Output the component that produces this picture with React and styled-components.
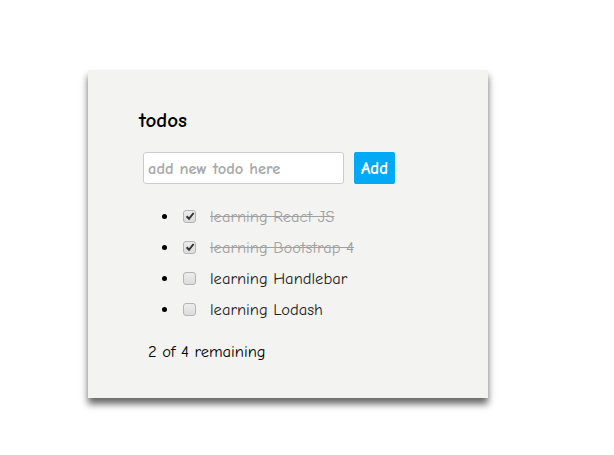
import React, { useState } from "react";
import styled, { createGlobalStyle } from "styled-components";

const GlobalStyle = createGlobalStyle`
  html, body {
    margin: 0;
    padding: 0;
    background: #ffffff;
  }
  body {
    font-family: "Comic Sans MS", "Comic Neue", "Open Sans", sans-serif;
  }
`;

const initialTodos = [
  { id: 1, text: "learning React JS", done: true },
  { id: 2, text: "learning Bootstrap 4", done: true },
  { id: 3, text: "learning Handlebar", done: false },
  { id: 4, text: "learning Lodash", done: false },
];

export default function App() {
  const [todos, setTodos] = useState(initialTodos);
  const [draft, setDraft] = useState("");

  const toggle = (id) =>
    setTodos(todos.map((t) => (t.id === id ? { ...t, done: !t.done } : t)));

  const add = () => {
    if (!draft.trim()) return;
    setTodos([...todos, { id: Date.now(), text: draft, done: false }]);
    setDraft("");
  };

  const remaining = todos.filter((t) => !t.done).length;

  return (
    <Page>
      <GlobalStyle />
      <Card>
        <Title>todos</Title>
        <Form
          onSubmit={(e) => {
            e.preventDefault();
            add();
          }}
        >
          <TodoInput
            type="text"
            placeholder="add new todo here"
            value={draft}
            onChange={(e) => setDraft(e.target.value)}
          />
          <AddButton type="submit">Add</AddButton>
        </Form>
        <List>
          {todos.map((t) => (
            <Item key={t.id}>
              <CheckWrap>
                <Check
                  type="checkbox"
                  checked={t.done}
                  onChange={() => toggle(t.id)}
                />
                {t.done && (
                  <Tick viewBox="0 0 12 12">
                    <path d="M2.6 6.3 L5 8.8 L9.6 3" />
                  </Tick>
                )}
              </CheckWrap>
              <Label $done={t.done}>{t.text}</Label>
            </Item>
          ))}
        </List>
        <Remaining>
          {remaining} of {todos.length} remaining
        </Remaining>
      </Card>
    </Page>
  );
}

const Page = styled.div`
  padding: 70px 0 40px 88px;
`;

const Card = styled.div`
  width: 400px;
  height: 328px;
  box-sizing: border-box;
  padding: 38px 0 0 51px;
  background: #f3f3f2;
  box-shadow: 0 6px 7px rgba(0, 0, 0, 0.6);
`;

const Title = styled.h3`
  margin: 0;
  font-size: 21px;
  line-height: 24px;
  font-weight: bold;
  color: #000;
`;

const Form = styled.form`
  display: flex;
  align-items: stretch;
  gap: 10px;
  margin: 20px 0 0 4px;
  height: 32px;
`;

const TodoInput = styled.input`
  width: 201px;
  box-sizing: border-box;
  border: 1px solid #cccccc;
  border-radius: 3px;
  background: #fff;
  padding: 0 4px;
  font-family: inherit;
  font-size: 16.5px;
  font-weight: bold;
  color: #333;
  outline: none;
  &::placeholder {
    color: #a9a9a9;
  }
`;

const AddButton = styled.button`
  width: 41px;
  border: none;
  border-radius: 2px;
  background: #03a9f4;
  color: #fff;
  font-family: inherit;
  font-size: 17px;
  font-weight: bold;
  padding: 0;
  cursor: pointer;
`;

const List = styled.ul`
  margin: 17px 0 0 0;
  padding-left: 40px;
  list-style: disc;
`;

const Item = styled.li`
  height: 31px;
  line-height: 31px;
  font-size: 16.5px;
  color: #222;
  &::marker {
    color: #000;
  }
`;

const CheckWrap = styled.span`
  position: relative;
  display: inline-block;
  width: 13px;
  height: 13px;
  margin: 0 3px 0 4px;
  vertical-align: -1px;
`;

const Check = styled.input`
  appearance: none;
  display: block;
  box-sizing: border-box;
  width: 13px;
  height: 13px;
  margin: 0;
  border: 1px solid #b5b5b5;
  border-radius: 3px;
  background: linear-gradient(#ededed, #dcdcdc);
  cursor: pointer;
`;

const Tick = styled.svg`
  position: absolute;
  left: 1px;
  top: 0px;
  width: 12px;
  height: 12px;
  pointer-events: none;
  path {
    fill: none;
    stroke: #333;
    stroke-width: 2;
  }
`;

const Label = styled.span`
  margin-left: 11px;
  color: ${(p) => (p.$done ? "#a0a0a0" : "#222")};
  text-decoration: ${(p) => (p.$done ? "line-through" : "none")};
`;

const Remaining = styled.div`
  margin: 17px 0 0 9px;
  font-size: 16.5px;
  line-height: 20px;
  color: #000;
`;
